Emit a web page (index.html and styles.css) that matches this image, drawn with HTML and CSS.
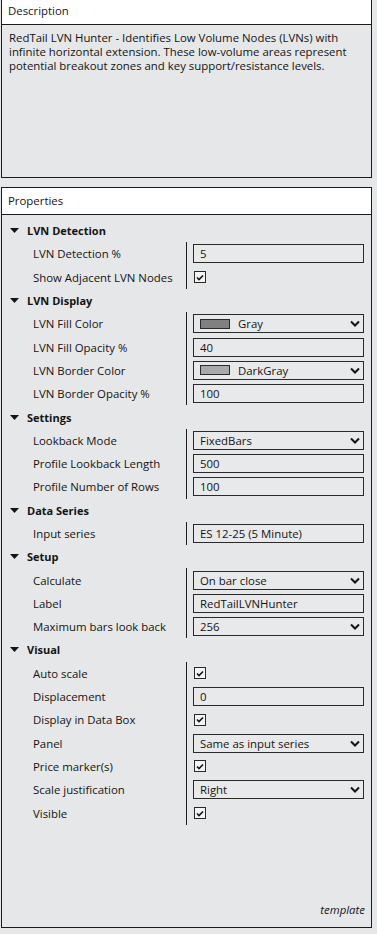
FILE: index.html
```html
<!DOCTYPE html>
<html>
<head>
<meta charset="utf-8">
<link rel="stylesheet" href="styles.css">
</head>
<body>
<div class="page">
  <section class="panel desc">
    <div class="panel-head">Description</div>
    <div class="desc-body">RedTail LVN Hunter - Identifies Low Volume Nodes (LVNs) with infinite horizontal extension. These low-volume areas represent potential breakout zones and key support/resistance levels.</div>
  </section>

  <section class="panel props">
    <div class="panel-head">Properties</div>
    <div class="props-body">
      <div class="groups">

        <div class="group">
          <div class="group-head"><svg class="tri" width="9" height="5" viewBox="0 0 9 5"><path d="M0 0H9L4.5 5Z"/></svg>LVN Detection</div>
          <div class="grid">
            <div class="label">LVN Detection %</div>
            <div class="value"><div class="box">5</div></div>
            <div class="label">Show Adjacent LVN Nodes</div>
            <div class="value"><span class="check"><svg width="8" height="7" viewBox="0 0 8 7"><path d="M1 3.5L3 5.5L7 1.5"/></svg></span></div>
          </div>
        </div>

        <div class="group">
          <div class="group-head"><svg class="tri" width="9" height="5" viewBox="0 0 9 5"><path d="M0 0H9L4.5 5Z"/></svg>LVN Display</div>
          <div class="grid">
            <div class="label">LVN Fill Color</div>
            <div class="value"><div class="box select"><span class="swatch gray"></span><span class="txt">Gray</span><svg class="chev" width="10" height="7" viewBox="0 0 10 7"><path d="M1 1.5L5 5.5L9 1.5"/></svg></div></div>
            <div class="label">LVN Fill Opacity %</div>
            <div class="value"><div class="box">40</div></div>
            <div class="label">LVN Border Color</div>
            <div class="value"><div class="box select"><span class="swatch darkgray"></span><span class="txt">DarkGray</span><svg class="chev" width="10" height="7" viewBox="0 0 10 7"><path d="M1 1.5L5 5.5L9 1.5"/></svg></div></div>
            <div class="label">LVN Border Opacity %</div>
            <div class="value"><div class="box">100</div></div>
          </div>
        </div>

        <div class="group">
          <div class="group-head"><svg class="tri" width="9" height="5" viewBox="0 0 9 5"><path d="M0 0H9L4.5 5Z"/></svg>Settings</div>
          <div class="grid">
            <div class="label">Lookback Mode</div>
            <div class="value"><div class="box select"><span class="txt">FixedBars</span><svg class="chev" width="10" height="7" viewBox="0 0 10 7"><path d="M1 1.5L5 5.5L9 1.5"/></svg></div></div>
            <div class="label">Profile Lookback Length</div>
            <div class="value"><div class="box">500</div></div>
            <div class="label">Profile Number of Rows</div>
            <div class="value"><div class="box">100</div></div>
          </div>
        </div>

        <div class="group">
          <div class="group-head"><svg class="tri" width="9" height="5" viewBox="0 0 9 5"><path d="M0 0H9L4.5 5Z"/></svg>Data Series</div>
          <div class="grid">
            <div class="label">Input series</div>
            <div class="value"><div class="box">ES 12-25 (5 Minute)</div></div>
          </div>
        </div>

        <div class="group">
          <div class="group-head"><svg class="tri" width="9" height="5" viewBox="0 0 9 5"><path d="M0 0H9L4.5 5Z"/></svg>Setup</div>
          <div class="grid">
            <div class="label">Calculate</div>
            <div class="value"><div class="box select"><span class="txt">On bar close</span><svg class="chev" width="10" height="7" viewBox="0 0 10 7"><path d="M1 1.5L5 5.5L9 1.5"/></svg></div></div>
            <div class="label">Label</div>
            <div class="value"><div class="box">RedTailLVNHunter</div></div>
            <div class="label">Maximum bars look back</div>
            <div class="value"><div class="box select"><span class="txt">256</span><svg class="chev" width="10" height="7" viewBox="0 0 10 7"><path d="M1 1.5L5 5.5L9 1.5"/></svg></div></div>
          </div>
        </div>

        <div class="group">
          <div class="group-head"><svg class="tri" width="9" height="5" viewBox="0 0 9 5"><path d="M0 0H9L4.5 5Z"/></svg>Visual</div>
          <div class="grid">
            <div class="label">Auto scale</div>
            <div class="value"><span class="check"><svg width="8" height="7" viewBox="0 0 8 7"><path d="M1 3.5L3 5.5L7 1.5"/></svg></span></div>
            <div class="label">Displacement</div>
            <div class="value"><div class="box">0</div></div>
            <div class="label">Display in Data Box</div>
            <div class="value"><span class="check"><svg width="8" height="7" viewBox="0 0 8 7"><path d="M1 3.5L3 5.5L7 1.5"/></svg></span></div>
            <div class="label">Panel</div>
            <div class="value"><div class="box select"><span class="txt">Same as input series</span><svg class="chev" width="10" height="7" viewBox="0 0 10 7"><path d="M1 1.5L5 5.5L9 1.5"/></svg></div></div>
            <div class="label">Price marker(s)</div>
            <div class="value"><span class="check"><svg width="8" height="7" viewBox="0 0 8 7"><path d="M1 3.5L3 5.5L7 1.5"/></svg></span></div>
            <div class="label">Scale justification</div>
            <div class="value"><div class="box select"><span class="txt">Right</span><svg class="chev" width="10" height="7" viewBox="0 0 10 7"><path d="M1 1.5L5 5.5L9 1.5"/></svg></div></div>
            <div class="label">Visible</div>
            <div class="value"><span class="check"><svg width="8" height="7" viewBox="0 0 8 7"><path d="M1 3.5L3 5.5L7 1.5"/></svg></span></div>
          </div>
        </div>

      </div>
      <div class="template">template</div>
    </div>
  </section>
</div>
</body>
</html>
```

FILE: styles.css
```css
html, body {
  margin: 0;
  padding: 0;
  background: #e6e7e8;
}
body {
  font-family: "Open Sans", "Noto Sans", sans-serif;
  font-size: 11.4px;
  color: #141414;
  overflow: hidden;
}
.page {
  width: 371px;
  margin-left: 1px;
  margin-top: -3px;
}
.panel {
  border: 1px solid #1c1c1c;
  background: #e6e7e8;
}
.panel-head {
  height: 26px;
  line-height: 26px;
  background: #ffffff;
  border-bottom: 1px solid #1c1c1c;
  padding-left: 6px;
  color: #14142a;
}
.desc-body {
  height: 152px;
  box-sizing: border-box;
  padding: 6px 6px 0 7px;
  line-height: 14px;
}
.props {
  margin-top: 9px;
}
.props-body {
  height: 712px;
  box-sizing: border-box;
  padding-top: 4px;
  display: flex;
  flex-direction: column;
}
.groups {
  flex: 1;
}
.group-head {
  height: 23.3px;
  display: flex;
  align-items: center;
  font-weight: 700;
  font-size: 11px;
  padding-left: 8px;
}
.tri {
  fill: #141414;
  margin-right: 8px;
}
.grid {
  display: grid;
  grid-template-columns: 184px 1fr;
  grid-auto-rows: 23.3px;
}
.label {
  padding-left: 31px;
  display: flex;
  align-items: center;
}
.value {
  border-left: 1px solid #1c1c1c;
  padding-left: 6px;
  padding-right: 6px;
  display: flex;
  align-items: center;
}
.box {
  width: 171px;
  height: 19px;
  box-sizing: border-box;
  border: 1px solid #2a2a2a;
  padding-left: 6px;
  display: flex;
  align-items: center;
  background: #e8e9ea;
}
.select .txt {
  flex: 1;
}
.chev {
  fill: none;
  stroke: #141414;
  stroke-width: 2;
  margin-right: 3px;
}
.swatch {
  width: 30px;
  height: 10px;
  box-sizing: border-box;
  border: 1px solid #2a2a2a;
  margin-right: 8px;
}
.swatch.gray { background: #808080; }
.swatch.darkgray { background: #a9a9a9; }
.check {
  width: 12px;
  height: 12px;
  box-sizing: border-box;
  border: 1px solid #2a2a2a;
  background: #f4f4f4;
  display: flex;
  align-items: center;
  justify-content: center;
  margin-left: 1px;
}
.check svg {
  fill: none;
  stroke: #141414;
  stroke-width: 1.6;
}
.template {
  text-align: right;
  font-style: italic;
  padding-right: 6px;
  padding-bottom: 10px;
  color: #14142a;
}
```
